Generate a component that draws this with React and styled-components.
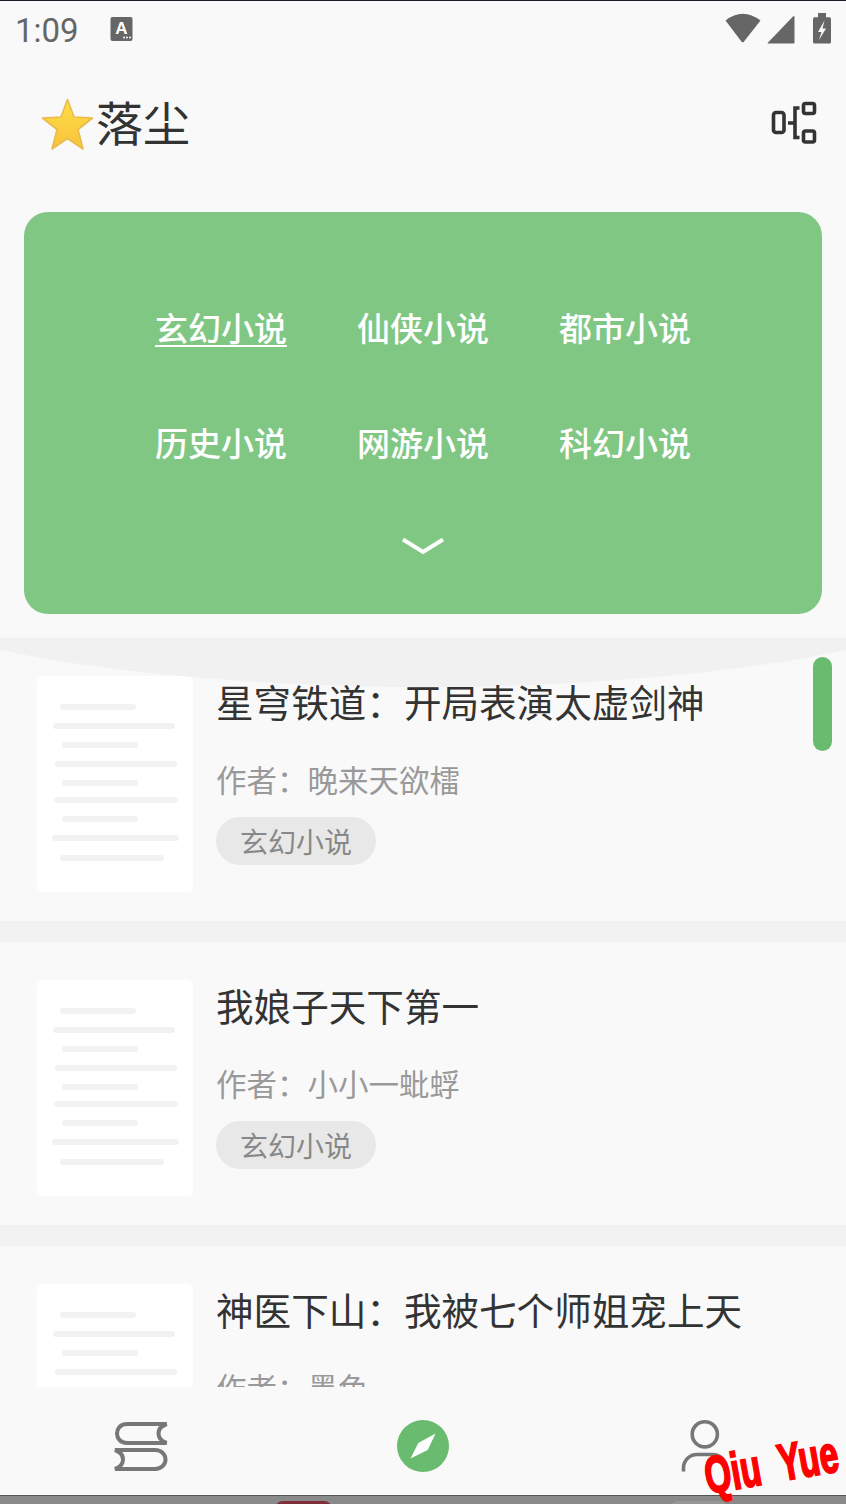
import React from "react";
import styled, { createGlobalStyle } from "styled-components";

const Global = createGlobalStyle`
  html, body { margin: 0; padding: 0; background: #f9f9f9; }
  body { font-family: "Noto Sans CJK SC", "Noto Sans", sans-serif; overflow: hidden; }
  * { box-sizing: border-box; }
`;

const Page = styled.div`
  position: relative;
  width: 846px;
  height: 1504px;
  display: flex;
  flex-direction: column;
  background: #f9f9f9;
  overflow: hidden;
`;

const StatusBar = styled.div`
  height: 60px;
  flex: none;
  border-top: 1px solid #1c1c28;
  padding: 11px 15px 0;
  display: flex;
  align-items: flex-start;
`;
const Clock = styled.span`
  font-family: Roboto, sans-serif;
  font-size: 33px;
  line-height: 38px;
  color: #666;
  width: 95px;
`;
const StatusRight = styled.svg`
  margin-left: auto;
  width: 106px;
  height: 32px;
`;
const BadgeIcon = styled.svg`
  width: 24px;
  height: 32px;
`;

const Header = styled.header`
  height: 152px;
  flex: none;
  padding: 0 28px 30px 41px;
  display: flex;
  align-items: center;
  gap: 1px;
`;
const Star = styled.svg`
  width: 54px;
  height: 54px;
  margin-top: 8px;
`;
const Title = styled.h1`
  margin: 0;
  font-size: 47px;
  line-height: 60px;
  font-weight: 400;
  color: #333;
`;
const TreeIcon = styled.svg`
  margin-left: auto;
  margin-top: 4px;
  width: 48px;
  height: 46px;
`;

const CategoryCard = styled.section`
  flex: none;
  margin: 0 24px 24px;
  height: 402px;
  border-radius: 24px;
  background: #81c784;
  padding-top: 57px;
  display: flex;
  flex-direction: column;
  align-items: center;
`;
const CategoryGrid = styled.div`
  width: 606px;
  display: grid;
  grid-template-columns: repeat(3, 1fr);
  grid-auto-rows: 115px;
`;
const Category = styled.a`
  display: flex;
  align-items: center;
  justify-content: center;
  font-size: 33px;
  font-weight: 500;
  color: #fff;
  text-decoration: ${(p) => (p.$active ? "underline" : "none")};
  text-decoration-thickness: 2px;
  text-underline-offset: 4px;
`;
const ChevronRow = styled.div`
  height: 96px;
  display: flex;
  align-items: center;
  justify-content: center;
`;
const Chevron = styled.svg`
  width: 44px;
  height: 20px;
`;

const List = styled.div`
  position: relative;
  flex: 1;
  min-height: 0;
  overflow: hidden;
  background: #f2f2f2;
`;
const Glow = styled.div`
  position: absolute;
  left: -177px;
  top: -205px;
  width: 1200px;
  height: 254px;
  border-radius: 50%;
  background: #f1f1f1;
`;
const ScrollThumb = styled.div`
  position: absolute;
  left: 813px;
  top: 19px;
  width: 19px;
  height: 94px;
  border-radius: 10px;
  background: #69bb6f;
`;
const Item = styled.article`
  height: 283px;
  margin-bottom: 21px;
  padding: 38px 0 0 37px;
  display: flex;
  gap: 23px;
  background: #f9f9f9;
`;
const Cover = styled.svg`
  flex: none;
  width: 156px;
  height: 216px;
  border-radius: 6px;
  background: #fff;
`;
const Info = styled.div`
  margin-top: -3px;
  display: flex;
  flex-direction: column;
  align-items: flex-start;
`;
const BookName = styled.h2`
  position: relative;
  z-index: 1;
  margin: 0;
  font-size: 37.6px;
  line-height: 56px;
  font-weight: 400;
  color: #333;
  white-space: nowrap;
`;
const Author = styled.div`
  margin-top: 30px;
  font-size: 30.5px;
  line-height: 40px;
  color: #999;
  white-space: nowrap;
`;
const Tag = styled.span`
  margin-top: 18px;
  width: 160px;
  height: 48px;
  border-radius: 24px;
  background: #e8e8e8;
  display: flex;
  align-items: center;
  justify-content: center;
  font-size: 28px;
  line-height: 48px;
  color: #888;
`;

const Nav = styled.nav`
  flex: none;
  height: 108px;
  padding-top: 10px;
  display: grid;
  grid-template-columns: repeat(3, 1fr);
  align-items: center;
  justify-items: center;
  background: #f9f9f9;
`;
const NavIcon = styled.svg`
  width: ${(p) => p.$w}px;
  height: ${(p) => p.$h}px;
`;
const HomeBar = styled.div`
  flex: none;
  height: 9px;
  border-top: 1px solid #555;
  background: #8a8a8a;
  padding: 5px 0 0 275px;
  display: flex;
  gap: 338px;
`;
const HomePill = styled.span`
  width: 57px;
  height: 10px;
  border-radius: 8px 8px 0 0;
  background: ${(p) => p.$color};
`;
const Watermark = styled.div`
  position: absolute;
  left: 669px;
  top: 1437px;
  width: 200px;
  text-align: center;
  font-family: "Liberation Sans", Arial, sans-serif;
  font-weight: 700;
  font-size: 52px;
  line-height: 56px;
  white-space: pre;
  color: #f00;
  -webkit-text-stroke: 2px #f00;
  transform: rotate(-10deg) scaleX(0.65);
`;

const categories = ["玄幻小说", "仙侠小说", "都市小说", "历史小说", "网游小说", "科幻小说"];
const books = [
  { name: "星穹铁道\uFF1A开局表演太虚剑神", author: "作者\uFF1A晚来天欲檑" },
  { name: "我娘子天下第一", author: "作者\uFF1A小小一蚍蜉" },
  { name: "神医下山\uFF1A我被七个师姐宠上天", author: "作者\uFF1A墨色" },
];
const coverLines = [
  [23, 76, 31], [16, 122, 50], [25, 76, 69], [18, 122, 88], [25, 76, 107],
  [17, 124, 124], [25, 76, 143], [15, 127, 162], [23, 104, 182],
];

const CoverArt = () => (
  <Cover viewBox="0 0 156 216">
    {coverLines.map(([x, w, y]) => (
      <rect key={y} x={x} y={y - 3} width={w} height={6} rx={3} fill="#f2f2f2" />
    ))}
  </Cover>
);

export default function App() {
  return (
    <Page>
      <Global />
      <StatusBar>
        <Clock>1:09</Clock>
        <BadgeIcon viewBox="0 0 24 32">
          <rect x="0.5" y="5" width="22" height="24" rx="2" fill="#666" />
          <text x="11.5" y="21.5" textAnchor="middle" fontFamily="Liberation Sans" fontWeight="700" fontSize="17" fill="#fff">A</text>
          <circle cx="14" cy="25.5" r="1" fill="#fff" />
          <circle cx="17" cy="25.5" r="1" fill="#fff" />
          <circle cx="20" cy="25.5" r="1" fill="#fff" />
        </BadgeIcon>
        <StatusRight viewBox="725 12 106 32">
          <path d="M725.5 20.5 Q742.7 7 760.5 20.5 L744 41.5 Q742.7 43.2 741.4 41.5 Z" fill="#666" />
          <path d="M794.5 17 V42.5 Q794.5 43.5 793.5 43.5 H768 Q767 43.5 768 42.5 L793 16.5 Q794.5 15.5 794.5 17 Z" fill="#666" />
          <path d="M818 17.3 V13 H826 V17.3 H829.5 Q831 17.3 831 19 V42 Q831 43.5 829.5 43.5 H814.5 Q813 43.5 813 42 V19 Q813 17.3 814.5 17.3 Z" fill="#666" />
          <path d="M824.5 20.5 L818 32 H821.5 L819 40 L826 28.5 H822.5 Z" fill="#f9f9f9" />
        </StatusRight>
      </StatusBar>

      <Header>
        <Star viewBox="0 0 54 54">
          <defs>
            <linearGradient id="starFill" x1="0" y1="0" x2="0" y2="1">
              <stop offset="0" stopColor="#ffdf45" />
              <stop offset="1" stopColor="#f8c23c" />
            </linearGradient>
          </defs>
          <path
            d="M26.5 1.5 L33 19 L51.5 20 L37 31.5 L42 51 L26.5 40.5 L11 51 L16 31.5 L1.5 20 L20 19 Z"
            fill="url(#starFill)"
            stroke="#e9bb4e"
            strokeWidth="1.6"
            strokeLinejoin="round"
          />
        </Star>
        <Title>落尘</Title>
        <TreeIcon viewBox="770 100 48 46" fill="none" stroke="#333" strokeWidth="3.6">
          <rect x="773.5" y="112.5" width="10.5" height="20" rx="2.5" />
          <rect x="803.5" y="103.5" width="11" height="10" rx="2" />
          <rect x="803.5" y="131" width="11" height="11" rx="2" />
          <path d="M799.5 108 H795 V137.5 H799.5 M788 123 H795" />
        </TreeIcon>
      </Header>

      <CategoryCard>
        <CategoryGrid>
          {categories.map((c, i) => (
            <Category key={c} $active={i === 0}>{c}</Category>
          ))}
        </CategoryGrid>
        <ChevronRow>
          <Chevron viewBox="0 0 44 20" fill="none" stroke="#fff" strokeWidth="4">
            <path d="M2 2.5 L22 15 L42 2.5" />
          </Chevron>
        </ChevronRow>
      </CategoryCard>

      <List>
        {books.map((b) => (
          <Item key={b.name}>
            <CoverArt />
            <Info>
              <BookName>{b.name}</BookName>
              <Author>{b.author}</Author>
              <Tag>玄幻小说</Tag>
            </Info>
          </Item>
        ))}
        <Glow />
        <ScrollThumb />
      </List>

      <Nav>
        <NavIcon $w={62} $h={56} viewBox="110 1418 62 56" fill="none" stroke="#777" strokeWidth="4">
          <path d="M166.7 1424 H127 C120 1424 117 1429 117 1433.5 C117 1438 120 1443 127 1443 H166.7 C161 1441 158.5 1437.5 158.5 1433.5 C158.5 1429.5 161 1426 166.7 1424 Z" />
          <path d="M115 1450 H155 C162 1450 165.5 1455 165.5 1459.5 C165.5 1464 162 1469 155 1469 H115 C120.5 1467 123 1463.5 123 1459.5 C123 1455.5 120.5 1452 115 1450 Z" />
        </NavIcon>
        <NavIcon $w={54} $h={54} viewBox="396 1419 54 54">
          <circle cx="423" cy="1446" r="26" fill="#69bb6f" />
          <path d="M435.5 1433.5 L427.7 1450 L410.5 1458.5 L418.3 1443 Z" fill="#fff" />
        </NavIcon>
        <NavIcon $w={50} $h={56} viewBox="680 1418 50 56" fill="none" stroke="#777" strokeWidth="3.6">
          <circle cx="704.8" cy="1434.3" r="12.6" />
          <path d="M683.5 1471.5 V1468 C683.5 1460 690 1454.5 697 1454.5 H712 C720 1454.5 726.5 1460 726.5 1468 V1471.5" />
        </NavIcon>
      </Nav>
      <HomeBar>
        <HomePill $color="#7d2f3c" />
        <HomePill $color="#979797" />
      </HomeBar>
      <Watermark>{"Qiu  Yue"}</Watermark>
    </Page>
  );
}
